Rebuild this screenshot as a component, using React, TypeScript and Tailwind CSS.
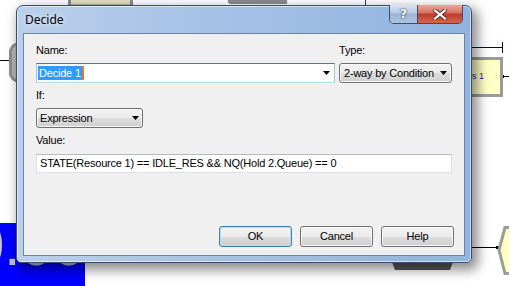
import React from "react";

const btnFace =
  "bg-[linear-gradient(to_bottom,#f2f2f2_0%,#ebebeb_50%,#dddddd_50%,#cfcfcf_100%)]";

function Arrow() {
  return (
    <svg width="7" height="4" viewBox="0 0 7 4" className="shrink-0">
      <path d="M0 0H7L3.5 4Z" fill="#000" />
    </svg>
  );
}

function DlgButton({ label, focused }: { label: string; focused?: boolean }) {
  return (
    <div
      className={`w-[73px] h-[21px] flex items-center justify-center rounded-[3px] border ${
        focused
          ? "border-[#3c7fb1] shadow-[inset_0_0_0_1px_#b4ddf3]"
          : "border-[#707070] shadow-[inset_0_0_0_1px_rgba(255,255,255,0.8)]"
      } ${btnFace}`}
    >
      {label}
    </div>
  );
}

// the Arena model that sits behind the dialog
function Backdrop() {
  return (
    <>
      <svg width="509" height="286" className="absolute left-0 top-0">
        {/* top module */}
        <rect x="69.5" y="-20" width="62" height="26" fill="#e2e2bb" stroke="#8a8a8a" strokeWidth="3" />
        <path d="M228 -2H284Q288 -2 287 4H231Q227 4 228 -2Z" fill="#8c8c8c" />
        <line x1="365.5" y1="0" x2="365.5" y2="6" stroke="#3a3a3a" />
        {/* left module */}
        <line x1="0" y1="60.5" x2="10" y2="60.5" stroke="#000" />
        <path d="M17 42L12 45L9 50V75L12 80L17 83Z" fill="#8e8e8e" />
        <path d="M17 45L13 48L12 51V74L13 77L17 80Z" fill="#b9b9b9" />
        {/* right module */}
        <line x1="470" y1="47.5" x2="502" y2="47.5" stroke="#00007a" />
        <line x1="502.5" y1="42" x2="502.5" y2="53" stroke="#00007a" />
        <line x1="502" y1="76.5" x2="509" y2="76.5" stroke="#000" />
        <rect x="501" y="75" width="3" height="3" fill="#000" />
        {/* bottom right module */}
        <line x1="462" y1="247.5" x2="498" y2="247.5" stroke="#000" />
        <rect x="496" y="246" width="3" height="3" fill="#000" />
        <path d="M505 227.5L499 250L505 273.5H515V227.5Z" fill="#ffffc4" stroke="#9c9c9c" strokeWidth="3" />
        {/* module peeking under the dialog */}
        <path d="M392 262H453L450 270H395Z" fill="#5a5a5a" />
      </svg>
      <div className="absolute left-[420px] top-[57px] w-[83px] h-[40px] border-[3px] border-[#9a9a9a] bg-[#ffffc6] flex items-center justify-end pr-[16px] text-[9px] text-[#1c1ca6]">
        Process 1
      </div>
      <div className="absolute left-0 top-[223px] w-[85px] h-[63px] bg-[#0000ff] overflow-hidden">
        <div className="absolute left-[-28px] top-[-7px] text-[58px] leading-[58px] text-[#c4c4d0] whitespace-nowrap">
          0.00
        </div>
      </div>
    </>
  );
}

export default function App() {
  return (
    <div className="relative w-[509px] h-[286px] overflow-hidden bg-white font-['Liberation_Sans',Arial,sans-serif]">
      <Backdrop />

      <div className="absolute left-[16px] top-[5px] w-[456px] h-[258px] flex flex-col pb-[6px] rounded-t-[7px] rounded-b-[5px] border border-[#3b4d68] bg-[linear-gradient(to_right,#bacfeb_0%,#a6c1e6_45%,#90b3e0_100%)] shadow-[inset_0_0_0_1px_rgba(255,255,255,0.55),4px_5px_12px_2px_rgba(0,0,0,0.45)]">
        {/* title bar */}
        <div className="h-[27px] flex items-center pl-[8px] pr-[8px]">
          <span className="font-['Noto_Sans',sans-serif] text-[12px] text-black [text-shadow:0_0_6px_rgba(255,255,255,0.95)]">
            Decide
          </span>
          <div className="ml-auto self-start -mt-px flex h-[19px] rounded-b-[5px] border border-t-0 border-[#3a4c66] overflow-hidden">
            <div className="w-[28px] flex items-center justify-center border-r border-[#3a4c66] bg-[linear-gradient(to_bottom,#d5e2f2_0%,#b7cae3_45%,#9bb3d4_50%,#aec4e0_100%)]">
              <span className="font-['DejaVu_Sans',sans-serif] font-bold text-[12px] leading-none text-white [text-shadow:0_0_1px_#2b3a52,0_0_2px_#2b3a52]">
                ?
              </span>
            </div>
            <div className="w-[44px] flex items-center justify-center bg-[linear-gradient(to_bottom,#eaa99b_0%,#d4705f_45%,#c0392b_50%,#d7644d_100%)]">
              <svg width="14" height="11" viewBox="0 0 14 11">
                <path d="M2 1.5L12 9.5M12 1.5L2 9.5" stroke="#5a2a26" strokeWidth="4" strokeLinecap="square" />
                <path d="M2 1.5L12 9.5M12 1.5L2 9.5" stroke="#fff" strokeWidth="2.2" strokeLinecap="square" />
              </svg>
            </div>
          </div>
        </div>

        {/* client area */}
        <div className="mx-[6px] flex-1 flex flex-col border border-[#6d83a3] bg-[#f0f0f0] px-[12px] pt-[10px] pb-[8px] text-[11px] tracking-[-0.2px] text-black">
          <div className="flex gap-[4px] leading-[13px]">
            <div className="w-[299px]">Name:</div>
            <div>Type:</div>
          </div>
          <div className="mt-[6px] flex gap-[4px]">
            <div className="w-[299px] h-[20px] flex items-center pl-[1px] pr-[4px] bg-white border border-[#a4c9e3] border-t-[#3d7bad] border-b-[#b7d9ed]">
              <span className="bg-[#3399ff] text-white leading-[14px] px-[1px]">Decide 1</span>
              <span className="w-[2px] h-[14px] bg-[#e5761d]" />
              <span className="ml-auto">
                <Arrow />
              </span>
            </div>
            <div className={`w-[113px] h-[20px] flex items-center justify-between pl-[4px] pr-[4px] rounded-[3px] border border-[#707070] shadow-[inset_0_0_0_1px_rgba(255,255,255,0.8)] ${btnFace}`}>
              <span>2-way by Condition</span>
              <Arrow />
            </div>
          </div>
          <div className="mt-[6px] leading-[13px]">If:</div>
          <div className={`mt-[6px] w-[107px] h-[20px] flex items-center justify-between pl-[3px] pr-[3px] rounded-[3px] border border-[#707070] shadow-[inset_0_0_0_1px_rgba(255,255,255,0.8)] ${btnFace}`}>
            <span>Expression</span>
            <Arrow />
          </div>
          <div className="mt-[6px] leading-[13px]">Value:</div>
          <div className="mt-[7px] h-[19px] flex items-center pl-[3px] bg-white border border-[#dbdfe6] border-t-[#b5b9c0] whitespace-nowrap">
            STATE(Resource 1) == IDLE_RES &amp;&amp; NQ(Hold 2.Queue) == 0
          </div>
          <div className="mt-auto -mr-[2px] flex justify-end gap-[8px]">
            <DlgButton label="OK" focused />
            <DlgButton label="Cancel" />
            <DlgButton label="Help" />
          </div>
        </div>
      </div>
    </div>
  );
}
